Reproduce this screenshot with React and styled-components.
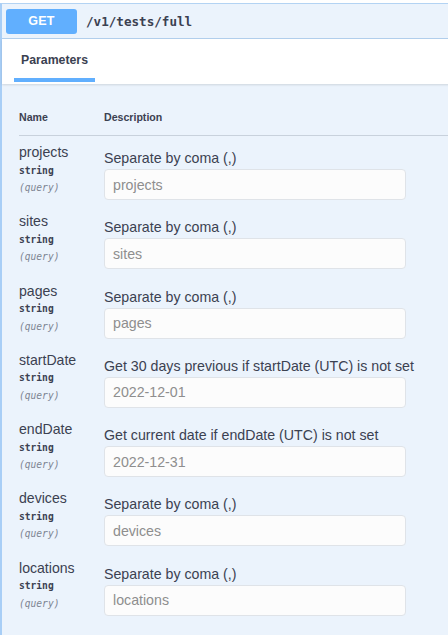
import React from "react";
import styled, { createGlobalStyle } from "styled-components";

const Global = createGlobalStyle`
  html, body { margin: 0; padding: 0; background: #ffffff; overflow: hidden; }
  body { font-family: "Liberation Sans", Arial, sans-serif; color: #3b4151; }
  * { box-sizing: border-box; }
`;

const Card = styled.div`
  margin-top: 3px;
  width: 470px;
  min-height: 640px;
  border-left: 2px solid #a8cef6;
  border-top: 1px solid #b3d3f3;
  background: #ebf3fc;
`;

const Summary = styled.div`
  display: flex;
  align-items: center;
  height: 35px;
  padding: 0 4px;
  border-bottom: 1px solid #b3d0ee;
`;

const Method = styled.span`
  display: flex;
  align-items: center;
  justify-content: center;
  width: 71px;
  height: 25px;
  border-radius: 3px;
  background: #61affe;
  color: #ffffff;
  font-family: "Liberation Sans", Arial, sans-serif;
  font-weight: 700;
  font-size: 12.5px;
  letter-spacing: 0.2px;
`;

const Path = styled.span`
  margin-left: 9px;
  font-family: "DejaVu Sans Mono", "Liberation Mono", monospace;
  font-weight: 700;
  font-size: 12.6px;
  color: #3b4151;
`;

const TabBar = styled.div`
  display: flex;
  align-items: flex-end;
  height: 45px;
  padding-left: 12px;
  background: #ffffff;
  box-shadow: 0 1px 2px rgba(0, 0, 0, 0.12);
  position: relative;
`;

const Tab = styled.div`
  width: 81px;
  padding: 0 0 10px 7px;
  margin-bottom: 2px;
  font-family: "Liberation Sans", Arial, sans-serif;
  font-weight: 700;
  font-size: 12.3px;
  line-height: 16px;
  color: #3b4151;
  border-bottom: 4px solid #61affe;
`;

const Body = styled.div`
  padding: 0 0 0 17px;
`;

const HeadRow = styled.div`
  display: grid;
  grid-template-columns: 85px 1fr;
  align-items: end;
  height: 52px;
  padding-bottom: 12px;
  border-bottom: 1px solid #c8d1dc;
  font-family: "Liberation Sans", Arial, sans-serif;
  font-weight: 700;
  font-size: 10.6px;
  color: #3b4151;
`;

const Row = styled.div`
  display: grid;
  grid-template-columns: 85px 1fr;
  padding: 8px 0 5.3px;
`;

const NameCell = styled.div`
  display: flex;
  flex-direction: column;
`;

const ParamName = styled.div`
  font-family: "Liberation Sans", Arial, sans-serif;
  font-size: 14.1px;
  line-height: 16px;
  color: #3b4151;
`;

const ParamType = styled.div`
  margin-top: 4.5px;
  font-family: "DejaVu Sans Mono", "Liberation Mono", monospace;
  font-weight: 700;
  font-size: 9.6px;
  line-height: 12px;
  color: #3b4151;
`;

const ParamIn = styled.div`
  margin-top: 5.5px;
  font-family: "DejaVu Sans Mono", "Liberation Mono", monospace;
  font-style: italic;
  font-size: 9.6px;
  line-height: 12px;
  color: #7d8492;
`;

const DescCell = styled.div`
  display: flex;
  flex-direction: column;
  padding-top: 6px;
`;

const Desc = styled.div`
  font-family: "Liberation Sans", Arial, sans-serif;
  font-size: 14.2px;
  line-height: 16px;
  color: #3b4151;
`;

const Input = styled.input`
  margin-top: 3px;
  width: 302px;
  height: 31px;
  padding: 0 8px;
  border: 1px solid #dfe3e8;
  border-radius: 4px;
  background: #fcfcfc;
  font-family: "Liberation Sans", Arial, sans-serif;
  font-size: 14.2px;
  color: #3b4151;
  outline: none;
  &::placeholder { color: #8e8e8e; opacity: 1; }
`;

const params = [
  { name: "projects", desc: "Separate by coma (,)", ph: "projects" },
  { name: "sites", desc: "Separate by coma (,)", ph: "sites" },
  { name: "pages", desc: "Separate by coma (,)", ph: "pages" },
  { name: "startDate", desc: "Get 30 days previous if startDate (UTC) is not set", ph: "2022-12-01" },
  { name: "endDate", desc: "Get current date if endDate (UTC) is not set", ph: "2022-12-31" },
  { name: "devices", desc: "Separate by coma (,)", ph: "devices" },
  { name: "locations", desc: "Separate by coma (,)", ph: "locations" },
];

export default function App() {
  return (
    <>
      <Global />
      <Card>
        <Summary>
          <Method>GET</Method>
          <Path>/v1/tests/full</Path>
        </Summary>
        <TabBar>
          <Tab>Parameters</Tab>
        </TabBar>
        <Body>
          <HeadRow>
            <div>Name</div>
            <div>Description</div>
          </HeadRow>
          {params.map((p) => (
            <Row key={p.name}>
              <NameCell>
                <ParamName>{p.name}</ParamName>
                <ParamType>string</ParamType>
                <ParamIn>(query)</ParamIn>
              </NameCell>
              <DescCell>
                <Desc>{p.desc}</Desc>
                <Input readOnly placeholder={p.ph} />
              </DescCell>
            </Row>
          ))}
        </Body>
      </Card>
    </>
  );
}
